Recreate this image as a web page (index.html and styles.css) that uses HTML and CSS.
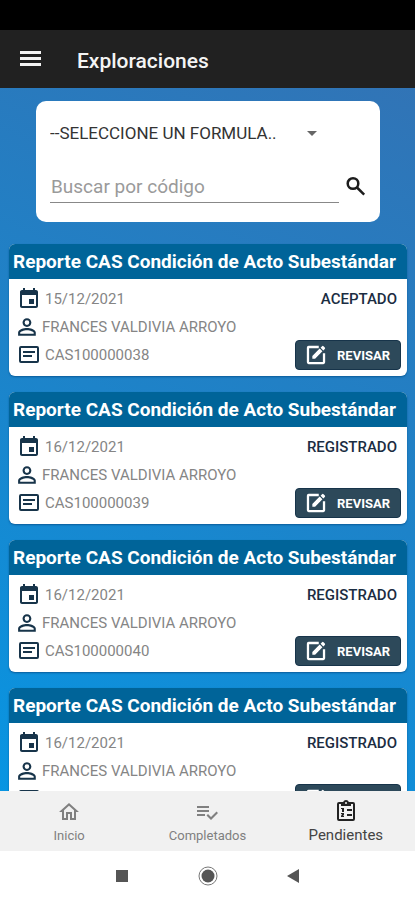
FILE: index.html
```html
<!DOCTYPE html>
<html lang="es">
<head>
<meta charset="utf-8">
<meta name="viewport" content="width=device-width, initial-scale=1">
<title>Exploraciones</title>
<link rel="stylesheet" href="styles.css">
</head>
<body>
<svg class="sprite" aria-hidden="true">
  <symbol id="calendar" viewBox="0 0 24 24"><path d="M17 12h-5v5h5v-5zM16 1v2H8V1H6v2H5c-1.110 0-2 .9-2 2v14c0 1.100.890 2 2 2h14c1.100 0 2-.9 2-2V5c0-1.100-.9-2-2-2h-1V1h-2zm3 18H5V8h14v11z"/></symbol>
  <symbol id="person" viewBox="3 3 19 18"><path d="M12 5.900a2.100 2.100 0 1 1 0 4.200 2.100 2.100 0 0 1 0-4.200m0 9c2.970 0 6.100 1.460 6.100 2.100v1.100H5.900V17c0-.640 3.130-2.100 6.100-2.100M12 4C9.790 4 8 5.790 8 8s1.790 4 4 4 4-1.790 4-4-1.790-4-4-4zm0 9c-2.670 0-8 1.340-8 4v3h16v-3c0-2.660-5.330-4-8-4z"/></symbol>
  <symbol id="card" viewBox="0 0 24 24"><path d="M20 3H4a2 2 0 0 0-2 2v13a2 2 0 0 0 2 2h16a2 2 0 0 0 2-2V5a2 2 0 0 0-2-2zm0 15H4V5h16v13zM6 8h12v2H6zM6 12h9v2H6z"/></symbol>
  <symbol id="edit" viewBox="0 0 24 24"><path d="M15 2v2.500H4.500v15h15V10H22v10a2 2 0 0 1-2 2H4a2 2 0 0 1-2-2V4a2 2 0 0 1 2-2zM8 13v3h3l8-8-3-3zM17 4l3 3 1.600-1.600a1.200 1.200 0 0 0 0-1.600l-1.400-1.400a1.200 1.200 0 0 0-1.600 0z"/></symbol>
</svg>
<div class="screen">
  <div class="status-bar"></div>
  <header class="app-bar">
    <button class="menu" type="button" aria-label="Menú">
      <svg viewBox="0 0 22 16"><path d="M1 0h21v3H1zM1 6h21v3H1zM1 12h21v3H1z"/></svg>
    </button>
    <h1>Exploraciones</h1>
  </header>
  <main class="content">
    <form class="search">
      <div class="picker">
        <select aria-label="Formulario"><option>--SELECCIONE UN FORMULA..</option></select>
        <svg class="arrow" viewBox="0 0 10 5" aria-hidden="true"><path d="M0 0h10L5 5z"/></svg>
      </div>
      <div class="query">
        <input type="text" placeholder="Buscar por código" aria-label="Buscar por código">
        <button type="button" aria-label="Buscar">
          <svg viewBox="0 0 20 20"><circle cx="7" cy="7.500" r="5.300"/><path d="M11 11.500l7.200 7.200"/></svg>
        </button>
      </div>
    </form>

    <article class="report">
      <h2>Reporte CAS Condición de Acto Subestándar</h2>
      <div class="body">
        <div class="row"><svg><use href="#calendar"/></svg><span>15/12/2021</span><strong>ACEPTADO</strong></div>
        <div class="row person"><svg><use href="#person"/></svg><span>FRANCES VALDIVIA ARROYO</span></div>
        <div class="row"><svg><use href="#card"/></svg><span>CAS100000038</span><button type="button"><svg><use href="#edit"/></svg>REVISAR</button></div>
      </div>
    </article>
    <article class="report">
      <h2>Reporte CAS Condición de Acto Subestándar</h2>
      <div class="body">
        <div class="row"><svg><use href="#calendar"/></svg><span>16/12/2021</span><strong>REGISTRADO</strong></div>
        <div class="row person"><svg><use href="#person"/></svg><span>FRANCES VALDIVIA ARROYO</span></div>
        <div class="row"><svg><use href="#card"/></svg><span>CAS100000039</span><button type="button"><svg><use href="#edit"/></svg>REVISAR</button></div>
      </div>
    </article>
    <article class="report">
      <h2>Reporte CAS Condición de Acto Subestándar</h2>
      <div class="body">
        <div class="row"><svg><use href="#calendar"/></svg><span>16/12/2021</span><strong>REGISTRADO</strong></div>
        <div class="row person"><svg><use href="#person"/></svg><span>FRANCES VALDIVIA ARROYO</span></div>
        <div class="row"><svg><use href="#card"/></svg><span>CAS100000040</span><button type="button"><svg><use href="#edit"/></svg>REVISAR</button></div>
      </div>
    </article>
    <article class="report">
      <h2>Reporte CAS Condición de Acto Subestándar</h2>
      <div class="body">
        <div class="row"><svg><use href="#calendar"/></svg><span>16/12/2021</span><strong>REGISTRADO</strong></div>
        <div class="row person"><svg><use href="#person"/></svg><span>FRANCES VALDIVIA ARROYO</span></div>
        <div class="row"><svg><use href="#card"/></svg><span></span><button type="button" aria-label="Revisar"><svg><use href="#edit"/></svg></button></div>
      </div>
    </article>
  </main>
  <nav class="tabs">
    <a href="#inicio">
      <svg viewBox="0 0 24 24"><path d="M12 3L2 12h3v8h6v-6h2v6h6v-8h3L12 3zm5 15h-2v-6H9v6H7v-7.800l5-4.500 5 4.500V18z"/></svg>
      Inicio
    </a>
    <a href="#completados">
      <svg viewBox="0 0 24 24"><path d="M14 10H2v2h12v-2zm0-4H2v2h12V6zM2 16h8v-2H2v2zm19.500-4.500L23 13l-7 7-4.500-4.500L13 14l3 3 5.500-5.500z"/></svg>
      Completados
    </a>
    <a class="active" href="#pendientes">
      <svg viewBox="0 0 24 24"><path d="M19 3h-4.180C14.400 1.840 13.300 1 12 1s-2.400.840-2.820 2H5a2 2 0 0 0-2 2v15a2 2 0 0 0 2 2h14a2 2 0 0 0 2-2V5a2 2 0 0 0-2-2zm-7 0a1 1 0 1 1 0 2 1 1 0 0 1 0-2zm7 17H5V5h2v2h10V5h2v15zM13 10h5v2h-5zM13 15h5v2h-5zM7 9h3v4H8v-3H7zM7 14h3v2l-1 1h1v1H7v-1l1-2H7z"/></svg>
      Pendientes
    </a>
  </nav>
  <div class="system-nav">
    <button type="button" aria-label="Recientes"><svg viewBox="0 0 20 20"><path d="M4 4h12v12H4z"/></svg></button>
    <button type="button" aria-label="Inicio del sistema"><svg viewBox="0 0 20 20"><circle class="ring" cx="10" cy="10" r="9"/><circle cx="10" cy="10" r="6.500"/></svg></button>
    <button type="button" aria-label="Atrás"><svg viewBox="0 0 20 20"><path d="M15 3v14L3 10z"/></svg></button>
  </div>
</div>
</body>
</html>
```

FILE: styles.css
```css
* { box-sizing: border-box; }
body { margin: 0; font-family: Roboto, "Liberation Sans", sans-serif; }
svg { display: block; flex: none; fill: currentColor; }
button { border: 0; padding: 0; background: none; font: inherit; color: inherit; }
.sprite { width: 0; height: 0; position: absolute; }

.screen { display: flex; flex-direction: column; height: 100vh; }
.status-bar { height: 30px; flex: none; background: #000; }

.app-bar {
  display: flex; align-items: center; gap: 36px;
  height: 58px; flex: none; padding: 0 19px;
  background: #212121; color: #f4f4f4;
}
.menu svg { width: 22px; height: 16px; }
h1 { margin: 0; padding-top: 4px; font-size: 21px; line-height: 28px; font-weight: 500; }

.content {
  flex: 1; min-height: 0; overflow: hidden;
  padding: 13px 8px 0 9px;
  background: linear-gradient(205deg, #3174b6, #1d83c9 50%, #0895e2);
}

.search {
  margin: 0 27px 22px; padding: 12px 12px 19px 14px;
  background: #fff; border-radius: 10px;
}
.picker { position: relative; display: flex; align-items: center; margin-right: 48px; }
select {
  appearance: none; width: 100%; height: 40px; padding: 0; border: 0;
  background: none; font: 17px Roboto, sans-serif; color: #333;
}
.arrow { position: absolute; right: 3px; width: 10px; height: 5px; color: #666; pointer-events: none; }
.query { display: flex; align-items: center; gap: 7px; margin-top: 16px; }
input {
  flex: 1; min-width: 0; height: 34px; padding: 2px 0 0 1px; border: 0;
  border-bottom: 1px solid #888; background: none;
  font: 19px Roboto, sans-serif; color: #333; outline: 0;
}
input::placeholder { color: #9a9a9a; opacity: 1; }
.query svg { width: 20px; height: 20px; margin-right: 2px; fill: none; stroke: #1c1c1c; stroke-width: 2.5; }

.report {
  margin-bottom: 16px; overflow: hidden;
  background: #fff; border-radius: 6px; box-shadow: 0 1px 2px #0a5c9a;
}
h2 {
  margin: 0; padding: 0 4px; background: #006499; color: #fff;
  font-size: 19px; line-height: 35px; font-weight: 700; white-space: nowrap;
}
.body { padding: 6px 6px 7px 8px; }
.row { display: flex; align-items: center; gap: 4px; height: 28px; font-size: 15px; color: #858585; }
.row > svg { width: 24px; height: 24px; color: #17344a; }
.row.person > svg { width: 21px; height: 20px; }
.row span { flex: 1; font-weight: 400; }
.row strong { padding-right: 4px; font-weight: 500; color: #1b2d42; }
.row button {
  display: flex; align-items: center; gap: 10px;
  width: 106px; height: 30px; padding: 0 9px;
  background: #2d495a; border: 1px solid #17344a; border-radius: 4px;
  color: #fff; font-size: 13px; font-weight: 700;
}
.row button svg { width: 22px; height: 22px; }

.tabs {
  display: grid; grid-template-columns: 1fr 1fr 1fr; flex: none;
  height: 60px; background: #f1f1f1;
}
.tabs a {
  display: flex; flex-direction: column; align-items: center; justify-content: flex-end; gap: 4px;
  padding-bottom: 7px;
  color: #808080; font-size: 13px; line-height: 16px; text-decoration: none;
}
.tabs svg { width: 24px; height: 24px; }
.tabs .active { padding-bottom: 8px; color: #444; font-size: 15px; }
.tabs .active svg { color: #222; }

.system-nav {
  display: flex; align-items: center; justify-content: center; gap: 66px;
  height: 49px; flex: none; background: #fff; color: #555;
}
.system-nav svg { width: 20px; height: 20px; }
.ring { fill: none; stroke: #777; stroke-width: 1; }
```
